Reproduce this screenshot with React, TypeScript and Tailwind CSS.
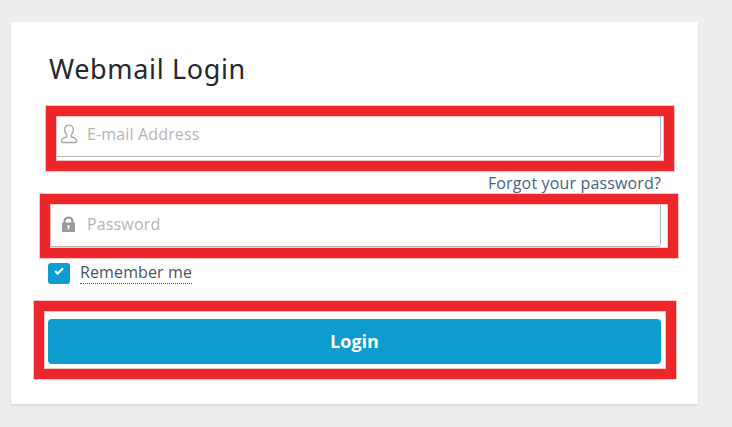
import React from "react";

function RedBox({ className }: { className: string }) {
  return <div className={"absolute box-border border-[10px] border-[#ed262b] shadow-[0_0_0_1px_#f9c5c7,inset_0_0_0_1px_#f9c5c7] " + className} />;
}

export default function App() {
  return (
    <div className="relative h-[427px] w-[732px] overflow-hidden bg-[#eeeeee] pl-[11px] pt-[22px] font-['Open_Sans','Noto_Sans',sans-serif]">
      <div className="h-[382px] w-[687px] bg-white px-[37px] pt-[26px] shadow-[0_1px_2px_rgba(0,0,0,0.12)]">
        <h1 className="h-[42px] pl-[1px] text-[27px] font-normal leading-[42px] tracking-[0.65px] text-[#22282e] font-['Noto_Sans','Open_Sans',sans-serif]">
          Webmail Login
        </h1>
        <div className="mt-[21px] flex h-[46px] items-center gap-[9px] rounded-[3px] border border-[#b5b5b5] pl-[11px]">
          <svg width="18" height="20" viewBox="0 0 18 20" fill="none" stroke="#a3a3a3" strokeWidth="1.3" className="shrink-0">
            <path d="M9 1.2c-2.7 0-4.3 2-4.3 4.7 0 2 .8 3.6 1.9 4.7.4.5.4 1.6-.1 2.1-.8.8-4.6 1.8-5 3.2-.3 1 0 2.6 1 2.6h13c1 0 1.300-1.600 1-2.600-.4-1.400-4.200-2.400-5-3.200-.5-.5-.5-1.600-.1-2.100 1.100-1.100 1.900-2.700 1.900-4.700 0-2.700-1.600-4.700-4.300-4.700z" />
          </svg>
          <span className="text-[16px] leading-none tracking-[0.15px] text-[#b4b4b4]">E-mail Address</span>
        </div>
        <div className="mt-[15px] h-[26px] text-right text-[16px] leading-[22px] tracking-[0.15px] text-[#46627f]">Forgot your password?</div>
        <div className="mt-[3px] flex h-[46px] items-center gap-[10px] rounded-[3px] border border-[#b5b5b5] pl-[13px]">
          <svg width="13" height="16" viewBox="0 0 13 16" fill="#9a9a9a" className="shrink-0">
            <path fillRule="evenodd" d="M1.500 6.500V4.800C1.500 2.200 3.600.5 6.500.5s5 1.700 5 4.300v1.700h.5c.6 0 1 .4 1 1V15c0 .6-.4 1-1 1H1c-.6 0-1-.4-1-1V7.500c0-.6.400-1 1-1h.5zm2.200 0h5.600V4.900c0-1.500-1.200-2.400-2.800-2.400s-2.800.9-2.800 2.400v1.600zM6.500 9a1.300 1.300 0 0 0-.7 2.400V13.500h1.400v-2.100A1.300 1.300 0 0 0 6.500 9z" />
          </svg>
          <span className="ml-[2px] text-[16px] leading-none tracking-[0.15px] text-[#b4b4b4]">Password</span>
        </div>
        <div className="mt-[15px] flex h-[22px] items-center gap-[10px]">
          <span className="mt-[1px] flex h-[21px] w-[22px] items-start justify-center rounded-[3px] bg-[#0c9ccd] pt-[4px]">
            <svg width="10" height="8" viewBox="0 0 10 8" fill="none" stroke="#ffffff" strokeWidth="2.200">
              <path d="M1 4l2.700 2.600L9 1.200" />
            </svg>
          </span>
          <span className="border-b border-dotted border-[#555555] text-[16px] leading-[21px] tracking-[0.12px] text-[#4a5560]">Remember me</span>
        </div>
        <div className="mt-[35px] flex h-[45px] items-center justify-center rounded-[4px] bg-[#0c9ccd] text-[18px] font-bold text-white">
          Login
        </div>
      </div>
      <RedBox className="left-[46px] top-[106px] h-[65px] w-[628px]" />
      <RedBox className="left-[40px] top-[194px] h-[64px] w-[638px]" />
      <RedBox className="left-[34px] top-[301px] h-[78px] w-[642px]" />
    </div>
  );
}
